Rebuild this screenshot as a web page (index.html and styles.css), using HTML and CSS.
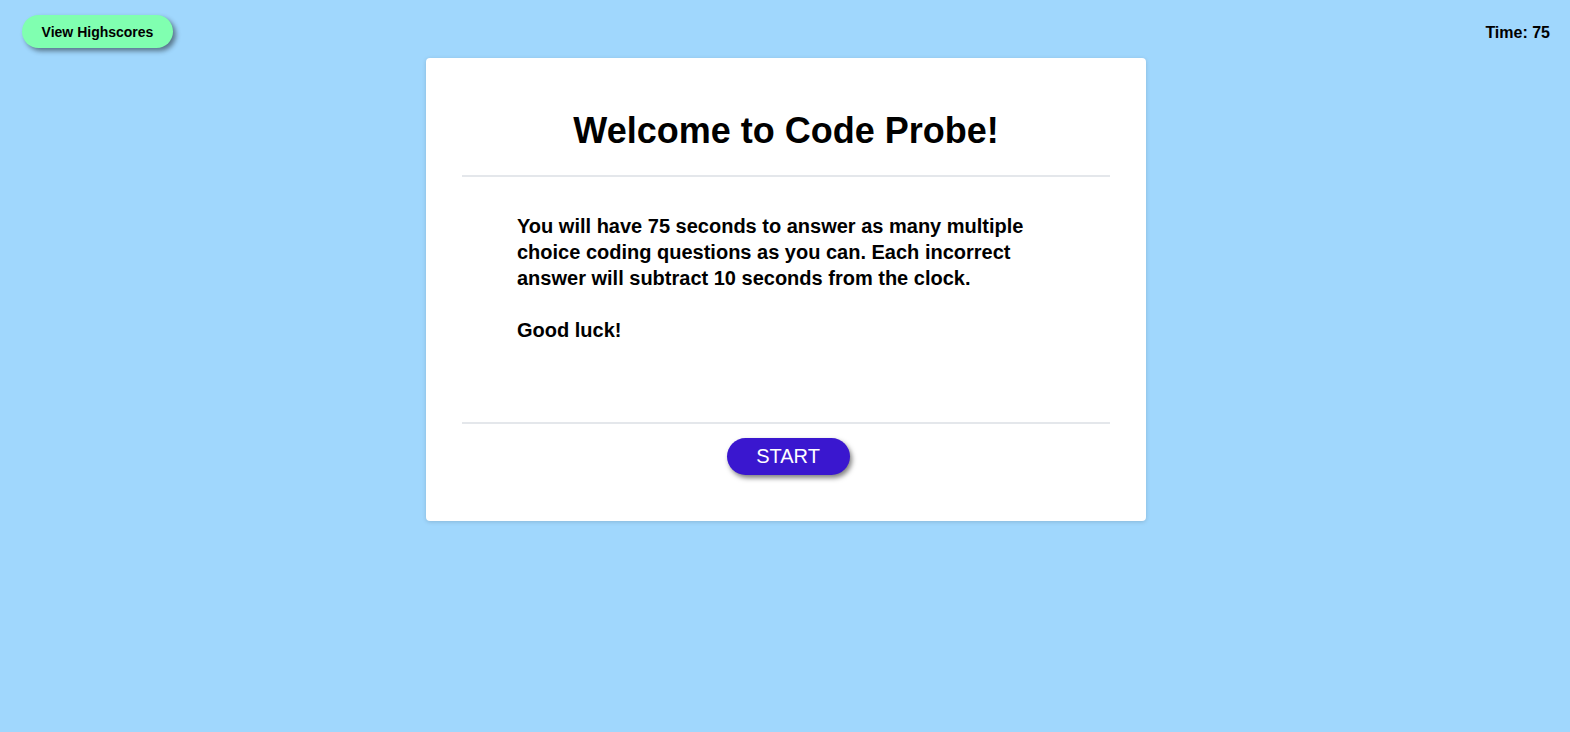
FILE: index.html
```html
<!DOCTYPE html>
<html>
<head>
<meta charset="utf-8">
<link rel="stylesheet" href="styles.css">
</head>
<body>
<header class="topbar">
  <button class="hs-btn">View Highscores</button>
  <div class="timer">Time: 75</div>
</header>
<main class="card">
  <h1 class="title">Welcome to Code Probe!</h1>
  <hr class="rule">
  <div class="intro">
    <p>You will have 75 seconds to answer as many multiple choice coding questions as you can. Each incorrect answer will subtract 10 seconds from the clock.</p>
    <p>Good luck!</p>
  </div>
  <hr class="rule">
  <div class="actions">
    <button class="start-btn">START</button>
  </div>
</main>
</body>
</html>
```
FILE: styles.css
```css
html, body {
  margin: 0;
  padding: 0;
}
body {
  background: #a0d7fd;
  font-family: "Liberation Sans", Arial, sans-serif;
  color: #000;
  min-height: 732px;
  padding-left: 2px;
  box-sizing: border-box;
}
.topbar {
  display: flex;
  justify-content: space-between;
  align-items: flex-start;
  padding: 15px 20px 0 20px;
  height: 43px;
  box-sizing: border-box;
}
.hs-btn {
  background: #80ffb0;
  border: none;
  border-radius: 17px;
  height: 33px;
  width: 151px;
  font-family: "Liberation Sans", Arial, sans-serif;
  font-weight: bold;
  font-size: 14px;
  color: #000;
  box-shadow: 3px 3px 5px rgba(0,0,0,0.45);
  padding: 0;
}
.timer {
  font-weight: bold;
  font-size: 16px;
  margin-top: 9px;
}
.card {
  width: 720px;
  margin: 15px auto 0 auto;
  background: #fff;
  border-radius: 4px;
  box-shadow: 0 1px 4px rgba(0,0,0,0.15);
  padding: 52px 36px 46px 36px;
  box-sizing: border-box;
}
.title {
  margin: 0;
  text-align: center;
  font-size: 36px;
  line-height: 41px;
  font-weight: bold;
}
.rule {
  border: none;
  height: 2px;
  background: #e4e7eb;
  margin: 0;
}
.title + .rule {
  margin-top: 24px;
}
.intro {
  padding: 36px 55px 79px 55px;
  font-size: 20px;
  font-weight: bold;
  line-height: 26px;
}
.intro p {
  margin: 0 0 26px 0;
}
.intro p:last-child {
  margin-bottom: 0;
}
.actions {
  display: flex;
  justify-content: center;
  padding-top: 14px;
  padding-left: 4px;
}
.start-btn {
  background: #3a17cf;
  color: #fff;
  border: none;
  border-radius: 19px;
  width: 123px;
  height: 37px;
  font-family: "Liberation Sans", Arial, sans-serif;
  font-size: 20px;
  box-shadow: 2px 3px 5px rgba(0,0,0,0.5);
  padding: 0;
}
```
